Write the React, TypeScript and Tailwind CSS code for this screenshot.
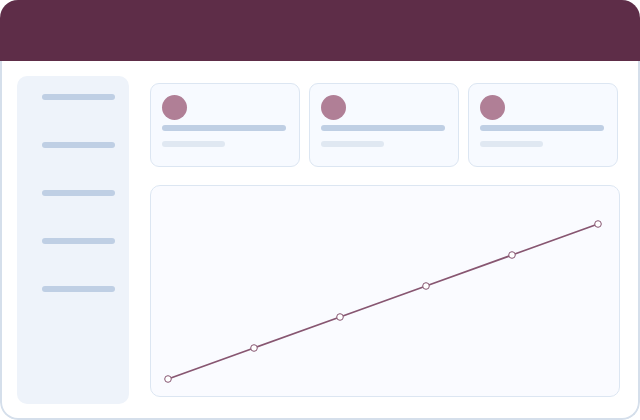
const navItems = ["overview", "reports", "users", "billing", "settings"];

// chart points, in px from the panel's inner corner
const points = [
  [17, 193],
  [103, 162],
  [189, 131],
  [275, 100],
  [361, 69],
  [447, 38],
];

function StatCard() {
  return (
    <div className="h-[84px] rounded-[9px] border border-[#dce6f2] bg-[#f7faff] px-[11px] pt-[11px]">
      <div className="h-[25px] w-[25px] rounded-full bg-[#b07f96]" />
      <div className="mt-[5px] h-[6px] w-[124px] rounded-full bg-[#bfcfe4]" />
      <div className="mt-[10px] h-[6px] w-[63px] rounded-full bg-[#e0e8f2]" />
    </div>
  );
}

function LineChart() {
  const d = points.map(([x, y], i) => `${i ? "L" : "M"}${x} ${y}`).join(" ");
  return (
    <svg width="468" height="210" viewBox="0 0 468 210" className="block">
      <path d={d} fill="none" stroke="#875671" strokeWidth="1.8" />
      {points.map(([x, y]) => (
        <circle key={x} cx={x} cy={y} r="3.3" fill="#ffffff" stroke="#875671" strokeWidth="1" />
      ))}
    </svg>
  );
}

export default function App() {
  return (
    <div className="h-[420px] w-[640px] bg-white">
      <div className="flex h-full flex-col overflow-hidden rounded-[18px]">
        <div className="h-[61px] shrink-0 bg-[#5e2d48]" />
        <div className="flex flex-1 gap-[21px] rounded-b-[18px] border-2 border-t-0 border-[#d5dfeb] pl-[15px] pr-[18px] pt-[15px] pb-[14px]">
          <div className="flex w-[112px] flex-col gap-[42px] rounded-[10px] bg-[#eef3fa] pl-[25px] pt-[18px]">
            {navItems.map((n) => (
              <div key={n} className="h-[6px] w-[73px] rounded-full bg-[#bfcfe4]" />
            ))}
          </div>
          <div className="flex flex-1 flex-col pt-[7px]">
            <div className="grid w-[468px] grid-cols-3 gap-[9px]">
              <StatCard />
              <StatCard />
              <StatCard />
            </div>
            <div className="mt-[18px] h-[212px] w-[470px] rounded-[10px] border border-[#dce6f2] bg-[#fafbff]">
              <LineChart />
            </div>
          </div>
        </div>
      </div>
    </div>
  );
}
